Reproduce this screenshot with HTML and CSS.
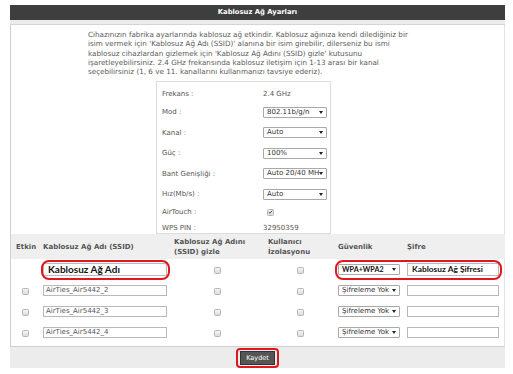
FILE: index.html
```html
<!DOCTYPE html>
<html lang="tr">
<head>
  <meta charset="UTF-8">
  <title>Kablosuz Ağ Ayarları</title>
  <link rel="stylesheet" href="styles.css">
</head>
<body>
  <div class="page">
    <div class="title-bar">Kablosuz Ağ Ayarları</div>
    <div class="title-strip"></div>

    <div class="panel">
      <p class="intro">
        Cihazınızın fabrika ayarlarında kablosuz ağ etkindir. Kablosuz ağınıza kendi dilediğiniz bir<br>
        isim vermek için 'Kablosuz Ağ Adı (SSID)' alanına bir isim girebilir, dilerseniz bu ismi<br>
        kablosuz cihazlardan gizlemek için 'Kablosuz Ağ Adını (SSID) gizle' kutusunu<br>
        işaretleyebilirsiniz. 2.4 GHz frekansında kablosuz iletişim için 1-13 arası bir kanal<br>
        seçebilirsiniz (1, 6 ve 11. kanallarını kullanmanızı tavsiye ederiz).
      </p>

      <div class="settings">
        <div class="row text-row"><span class="label">Frekans :</span><span>2.4 GHz</span></div>
        <div class="row"><span class="label">Mod :</span><span class="sel">802.11b/g/n<i></i></span></div>
        <div class="row"><span class="label">Kanal :</span><span class="sel">Auto<i></i></span></div>
        <div class="row"><span class="label">Güç :</span><span class="sel">100%<i></i></span></div>
        <div class="row"><span class="label">Bant Genişliği :</span><span class="sel">Auto 20/40 MH<i></i></span></div>
        <div class="row"><span class="label">Hız(Mb/s) :</span><span class="sel">Auto<i></i></span></div>
        <div class="row text-row"><span class="label">AirTouch :</span><span class="cb checked"><svg viewBox="0 0 8 8" width="6" height="6"><path d="M1.2 4.2 L3.2 6 L6.8 1.6" fill="none" stroke="#333" stroke-width="1.4"/></svg></span></div>
        <div class="row text-row"><span class="label">WPS PIN :</span><span>32950359</span></div>
      </div>

      <div class="grid-wrap">
        <table class="ssid-table">
          <colgroup>
            <col style="width:29px">
            <col style="width:130px">
            <col style="width:95px">
            <col style="width:70px">
            <col style="width:69px">
            <col style="width:101px">
          </colgroup>
          <thead>
            <tr>
              <th>Etkin</th>
              <th>Kablosuz Ağ Adı (SSID)</th>
              <th>Kablosuz Ağ Adını<br>(SSID) gizle</th>
              <th>Kullanıcı<br>İzolasyonu</th>
              <th>Güvenlik</th>
              <th>Şifre</th>
            </tr>
          </thead>
          <tbody>
            <tr>
              <td></td>
              <td><span class="field big">Kablosuz Ağ Adı</span></td>
              <td class="center"><span class="cb"></span></td>
              <td class="center"><span class="cb"></span></td>
              <td><span class="sel sec big">WPA+WPA2<i></i></span></td>
              <td><span class="field pass big">Kablosuz Ağ Şifresi</span></td>
            </tr>
            <tr>
              <td class="center"><span class="cb"></span></td>
              <td><span class="field">AirTies_Air5442_2</span></td>
              <td class="center"><span class="cb"></span></td>
              <td class="center"><span class="cb"></span></td>
              <td><span class="sel sec">Şifreleme Yok<i></i></span></td>
              <td><span class="field pass"></span></td>
            </tr>
            <tr>
              <td class="center"><span class="cb"></span></td>
              <td><span class="field">AirTies_Air5442_3</span></td>
              <td class="center"><span class="cb"></span></td>
              <td class="center"><span class="cb"></span></td>
              <td><span class="sel sec">Şifreleme Yok<i></i></span></td>
              <td><span class="field pass"></span></td>
            </tr>
            <tr>
              <td class="center"><span class="cb"></span></td>
              <td><span class="field">AirTies_Air5442_4</span></td>
              <td class="center"><span class="cb"></span></td>
              <td class="center"><span class="cb"></span></td>
              <td><span class="sel sec">Şifreleme Yok<i></i></span></td>
              <td><span class="field pass"></span></td>
            </tr>
          </tbody>
        </table>
        <!-- red marks drawn over the edited fields -->
        <div class="mark mark-ssid"></div>
        <div class="mark mark-sec"></div>
      </div>
    </div>

    <div class="footer">
      <span class="btn-mark"><button class="save">Kaydet</button></span>
    </div>
  </div>
</body>
</html>
```

FILE: styles.css
```css
body {
  margin: 0;
  background: #fff;
  font-family: "DejaVu Sans", Verdana, sans-serif;
  font-size: 7px;
  color: #555;
}
.page {
  width: 495px;
  margin-left: 10px;
  padding-top: 5px;
}
.title-bar {
  height: 15px;
  line-height: 15px;
  background: #3e3e3e;
  color: #fff;
  font-weight: bold;
  text-align: center;
  font-size: 6.8px;
}
.title-strip {
  height: 4px;
  background: #ececec;
  border-bottom: 1px solid #d4d4d4;
}
.panel {
  border-left: 1px solid #cfcfcf;
  border-right: 1px solid #e2e2e2;
  border-bottom: 1px solid #cfcfcf;
  height: 321px;
  display: flex;
  flex-direction: column;
}
.intro {
  margin: 5px 0 0 77px;
  white-space: nowrap;
  line-height: 9.3px;
  font-size: 7.2px;
  color: #5a5a5a;
}
.settings {
  margin: 5px 0 0 145px;
  width: 175px;
  height: 153px;
  box-sizing: border-box;
  border: 1px solid #dcdcdc;
  padding: 4px 0 0 5px;
}
.row {
  display: flex;
  align-items: center;
  height: 20.5px;
}
.row.text-row {
  height: 15.5px;
}
.label {
  width: 101px;
}
.sel {
  position: relative;
  display: inline-block;
  box-sizing: border-box;
  width: 64px;
  height: 11px;
  line-height: 9px;
  padding-left: 3px;
  border: 1px solid #a9a9a9;
  border-radius: 1px;
  background: #fff;
  color: #333;
  white-space: nowrap;
  overflow: hidden;
}
.sel i {
  position: absolute;
  right: 3px;
  top: 3px;
  border-left: 2px solid transparent;
  border-right: 2px solid transparent;
  border-top: 3px solid #222;
}
.cb {
  display: inline-flex;
  align-items: center;
  justify-content: center;
  box-sizing: border-box;
  width: 7px;
  height: 7px;
  border: 1px solid #b5b5b5;
  border-radius: 1.5px;
  background: linear-gradient(#f4f4f4, #dcdcdc);
  vertical-align: middle;
}
.cb.checked {
  margin-left: 4px;
}
.grid-wrap {
  position: relative;
}
.ssid-table {
  border-collapse: collapse;
  table-layout: fixed;
  width: 494px;
}
.ssid-table th {
  height: 25px;
  padding: 0 0 0 3px;
  background: #efefef;
  text-align: left;
  font-weight: bold;
  line-height: 10px;
  color: #555;
}
.ssid-table th:first-child {
  padding-left: 5px;
}
.ssid-table th:nth-child(3) {
  padding-left: 4px;
}
.ssid-table td {
  height: 21px;
  padding: 0 0 0 3px;
}
.ssid-table td.center {
  text-align: center;
  padding-left: 0;
}
.field {
  display: inline-block;
  box-sizing: border-box;
  width: 124px;
  height: 11px;
  line-height: 9px;
  padding-left: 2px;
  border: 1px solid #b9b9b9;
  background: #fff;
  color: #555;
  vertical-align: middle;
}
.field.pass {
  width: 92px;
}
.sel.sec {
  width: 62px;
  vertical-align: middle;
}
.big {
  height: 13px;
  line-height: 11px;
  font-family: Lato, "Liberation Sans", sans-serif;
  font-weight: bold;
  font-size: 10px;
  color: #111;
}
.field.big {
  padding-left: 4px;
}
.field.pass.big {
  font-size: 8.4px;
}
.sel.big {
  font-size: 7.2px;
  height: 11px;
  line-height: 9px;
}
.mark {
  position: absolute;
  border: 2px solid #e3161d;
  border-radius: 8px;
}
.mark-ssid {
  left: 30px;
  top: 26px;
  width: 125px;
  height: 16px;
}
.mark-sec {
  left: 324px;
  top: 26px;
  width: 163px;
  height: 16px;
}
.footer {
  height: 21px;
  background: #ececec;
  display: flex;
  justify-content: center;
  align-items: center;
}
.btn-mark {
  display: inline-block;
  border: 2px solid #e3161d;
  border-radius: 4px;
  padding: 1px 2px;
}
.save {
  display: block;
  height: 14px;
  padding: 0 5px;
  border: 1px solid #333;
  background: #555;
  color: #fff;
  font-family: "DejaVu Sans", Verdana, sans-serif;
  font-size: 6.5px;
}
```
